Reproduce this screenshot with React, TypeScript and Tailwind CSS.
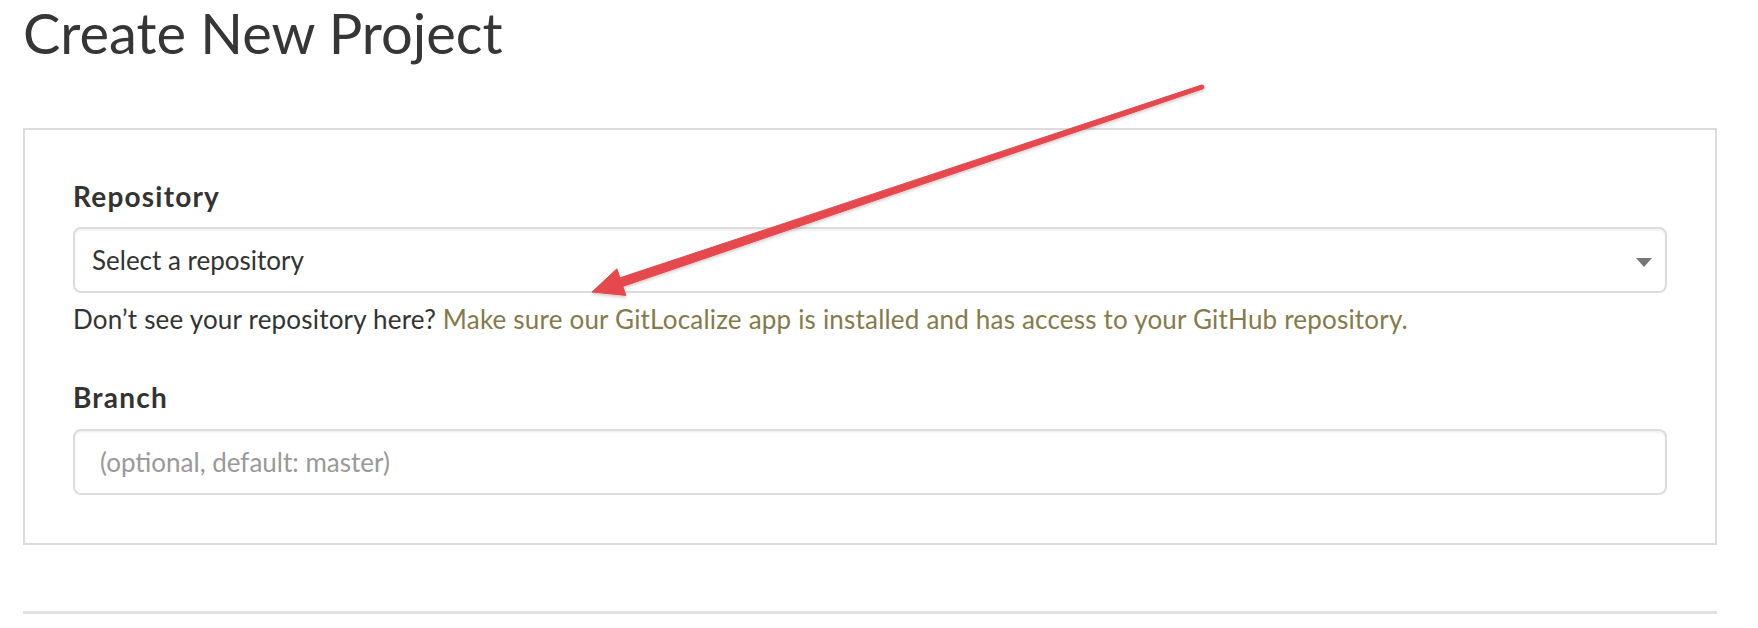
import { useState } from "react";

function Arrow() {
  // skitch-style annotation arrow drawn over the form
  return (
    <svg
      className="pointer-events-none absolute left-0 top-0"
      width={1758}
      height={628}
      viewBox="0 0 1758 628"
    >
      <defs>
        <filter id="arrowShadow" x="-10%" y="-10%" width="120%" height="130%">
          <feDropShadow dx="0" dy="2" stdDeviation="1.5" floodColor="#000" floodOpacity="0.18" />
        </filter>
      </defs>
      <g fill="#e5494d" stroke="#e5494d" strokeWidth={1} strokeLinejoin="round" filter="url(#arrowShadow)">
        <polygon points="1202.6,88.9 1201.4,85.1 620.0,277.8 616.9,268.8 592,292 625.9,295.4 622.8,286.4" />
        <circle cx={1202} cy={87} r={2} />
      </g>
    </svg>
  );
}

export default function App() {
  const [repo, setRepo] = useState("");
  const [branch, setBranch] = useState("");

  return (
    <div
      className="relative h-[628px] w-[1758px] overflow-hidden bg-white px-[23px] text-[#333]"
      style={{ fontFamily: "Lato, 'Open Sans', sans-serif" }}
    >
      <h1 className="text-[56px] font-normal leading-[66px] text-[#363636]">Create New Project</h1>

      {/* Form card */}
      <div className="mt-[62px] w-[1694px] border-2 border-[#dcdcdc] px-[48px] pb-[48px] pt-[52px]">
        <label className="block text-[28px] font-bold leading-[28px] tracking-[1.2px] text-[#333]">Repository</label>
        <div className="relative mt-[17px]">
          <select
            value={repo}
            onChange={(e) => setRepo(e.target.value)}
            className="h-[66px] w-full appearance-none rounded-[8px] border-2 border-[#dcdcdc] bg-white pl-[17px] pr-[50px] text-[26px] text-[#333] shadow-[inset_0_2px_2px_rgba(0,0,0,0.05)] outline-none"
          >
            <option value="">Select a repository</option>
          </select>
          <svg className="pointer-events-none absolute right-[15px] top-[31px]" width={16} height={9} viewBox="0 0 16 9">
            <polygon points="0,0 16,0 8,9" fill="#777" />
          </svg>
        </div>
        <p className="mt-[13px] text-[26px] leading-[26px] tracking-[0.2px]">
          Don’t see your repository here?{" "}
          <a href="#" className="text-[#857a4a]">
            Make sure our GitLocalize app is installed and has access to your GitHub repository.
          </a>
        </p>

        <label className="mt-[51px] block text-[28px] font-bold leading-[28px] tracking-[1.2px] text-[#333]">Branch</label>
        <input
          value={branch}
          onChange={(e) => setBranch(e.target.value)}
          placeholder="(optional, default: master)"
          className="mt-[18px] block h-[66px] w-full rounded-[8px] border-2 border-[#dcdcdc] bg-white px-[25px] text-[26px] text-[#333] shadow-[inset_0_2px_2px_rgba(0,0,0,0.05)] outline-none placeholder:text-[#999]"
        />
      </div>

      <div className="mt-[66px] h-[3px] w-[1694px] bg-[#e2e2e2]" />

      <Arrow />
    </div>
  );
}
